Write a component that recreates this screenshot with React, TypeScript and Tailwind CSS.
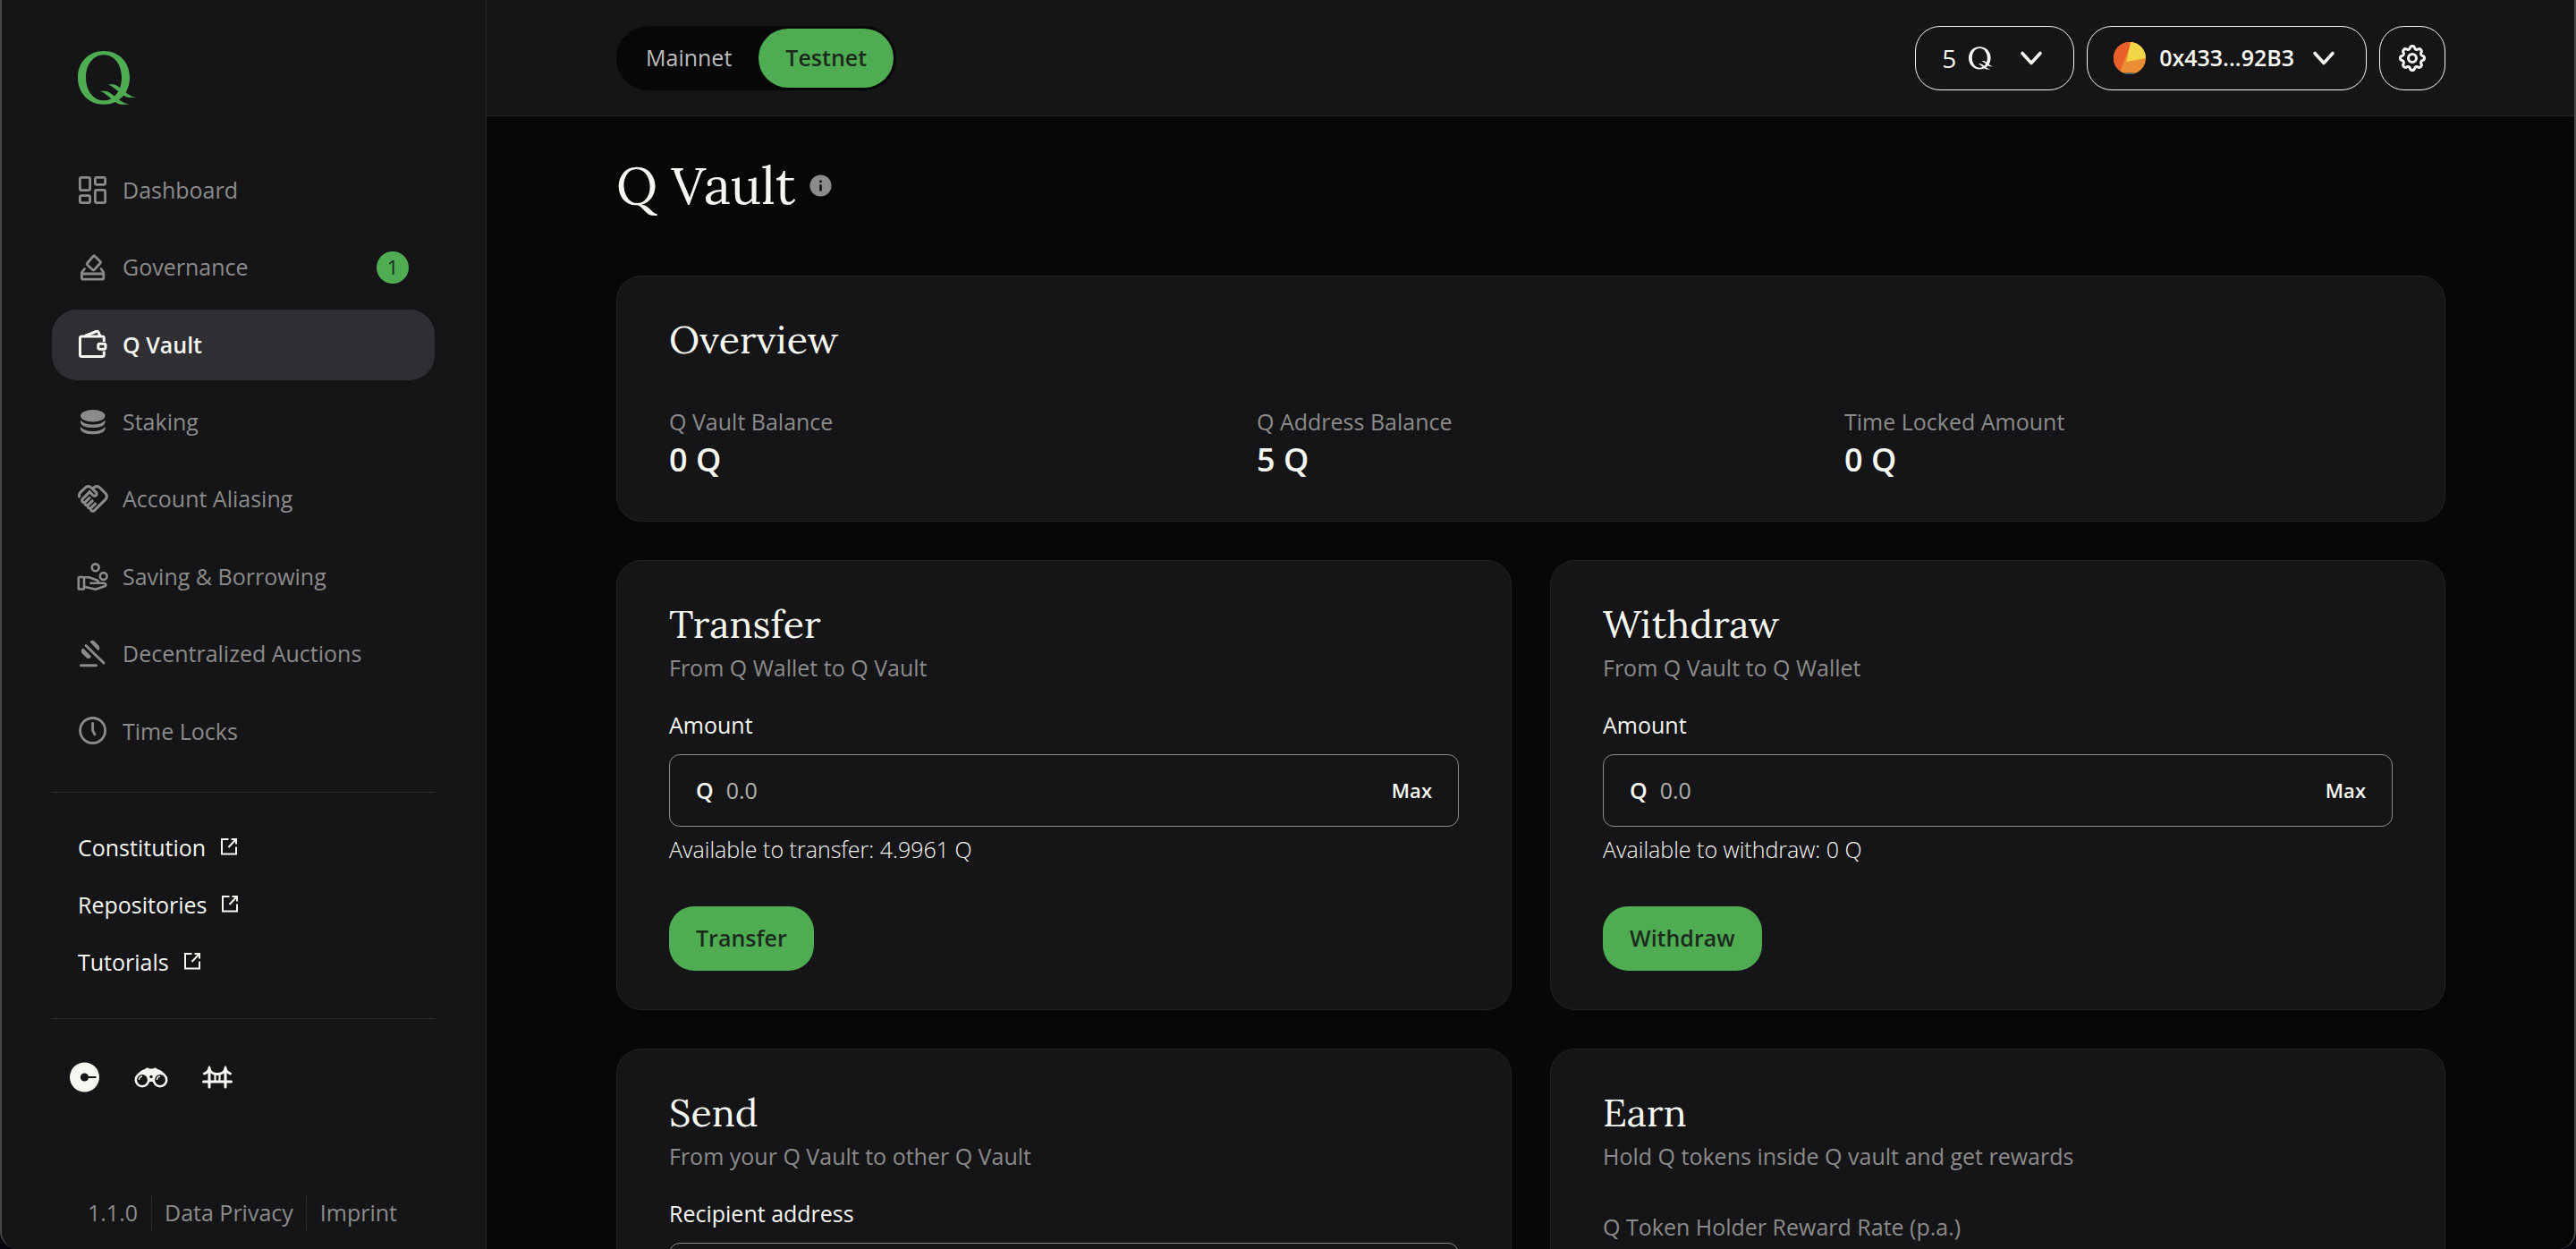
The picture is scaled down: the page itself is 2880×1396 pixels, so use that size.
import { useState } from "react";
import type { ReactNode } from "react";
import clsx from "clsx";
import { MdInfo, MdOutlineHandshake } from "react-icons/md";
import { TbSettings } from "react-icons/tb";

const NAV: { label: string; icon: ReactNode; badge?: number }[] = [
  {
    label: "Dashboard",
    icon: (
      <g stroke="currentColor" strokeWidth="2.8">
        <rect x="2.4" y="2.4" width="11.2" height="14.2" rx="1.6" />
        <rect x="19.4" y="2.4" width="11.2" height="8" rx="1.6" />
        <rect x="2.4" y="22.6" width="11.2" height="8" rx="1.6" />
        <rect x="19.4" y="16.4" width="11.2" height="14.2" rx="1.6" />
      </g>
    ),
  },
  {
    label: "Governance",
    badge: 1,
    icon: (
      <g stroke="currentColor" strokeWidth="2.8" strokeLinejoin="round" strokeLinecap="round">
        <path d="M18.6 4 25 10.2Q26 11.2 25 12.2L18.5 19.4Q17.5 20.4 16.5 19.4L10.7 14Q9.7 13 10.7 12L17.2 4.4Q18 3.4 18.6 4Z" />
        <path d="M7.5 18.5 4.4 22.5V28.5Q4.4 30.2 6 30.2H27Q28.8 30.2 28.8 28.5V22.5L26 18.5" />
        <path d="M5 24H28.5" />
      </g>
    ),
  },
  {
    label: "Q Vault",
    icon: (
      <g stroke="currentColor" strokeWidth="3" strokeLinejoin="round">
        <path d="M29.3 14V10Q29.3 8 27.3 8H4.500Q2.500 8 2.500 10V28.500Q2.500 30.500 4.500 30.500H27.300Q29.300 30.500 29.300 28.500V24.500" />
        <path d="M8 7.500 20.500 2.500Q22.500 1.800 23.300 3.800L24.800 7.500" />
        <rect x="22.8" y="16.2" width="8.2" height="6" rx="1.6" />
      </g>
    ),
  },
  {
    label: "Staking",
    icon: (
      <g fill="currentColor">
        <ellipse cx="16.8" cy="9.8" rx="13.8" ry="6.7" />
        <path d="M3 14.500Q7 19.500 16.800 19.500T30.600 14.500V17Q29.500 23 16.800 23T3 17Z" />
        <path d="M3 22Q7 27 16.800 27T30.600 22V24.500Q29.500 30.300 16.800 30.300T3 24.500Z" />
      </g>
    ),
  },
  {
    label: "Account Aliasing",
    icon: <MdOutlineHandshake x="-1.5" y="-2" size={37} />,
  },
  {
    label: "Saving & Borrowing",
    icon: (
      <g stroke="currentColor" strokeWidth="2.6" strokeLinejoin="round" strokeLinecap="round">
        <circle cx="19.7" cy="6.3" r="3.9" />
        <circle cx="28.7" cy="16" r="3.9" />
        <rect x=".8" y="17" width="6.2" height="13.5" rx="1" />
        <path d="M7 17.300H12.500L21.500 20.400Q24.500 22 21.800 23.700H14.500" />
        <path d="M22.500 23.800H29Q33 24.500 30.500 27L20 30.800 7 27.800" />
      </g>
    ),
  },
  {
    label: "Decentralized Auctions",
    icon: (
      <g>
        <path d="M9 7.500 29 27M3.500 29.800H20.500" stroke="currentColor" strokeWidth="3" strokeLinecap="round" />
        <path
          d="M6 10.500 15 19.500Q13.500 23.500 10 21.500L4.500 16Q2.500 12.500 6 10.500ZM13.500 3.500Q15.500 .5 18.500 2.500L23.700 8Q25.500 11.500 22.500 13Z"
          fill="currentColor"
        />
      </g>
    ),
  },
  {
    label: "Time Locks",
    icon: (
      <g stroke="currentColor" strokeWidth="2.8" strokeLinecap="round">
        <circle cx="16.6" cy="16.5" r="14" />
        <path d="M16.600 8.500V16.500L19 21" />
      </g>
    ),
  },
];

const LINKS = ["Constitution", "Repositories", "Tutorials"];

const BALANCES = [
  { label: "Q Vault Balance", value: "0 Q" },
  { label: "Q Address Balance", value: "5 Q" },
  { label: "Time Locked Amount", value: "0 Q" },
];

function QLogo({ className }: { className?: string }) {
  return (
    <svg viewBox="0 0 198 180" className={className} fill="currentColor">
      <path
        fillRule="evenodd"
        d="M87 0C138 0 174 38 174 89S138 179 87 179 0 140 0 89 36 0 87 0ZM87 13C52 13 27 46 27 89S52 166 87 166 147 132 147 89 122 13 87 13Z"
      />
      <path d="M101 112H116Q126 112 134 118L166 143Q179 153 198 156H174Q163 156 155 150L121 124Q112 117 101 112Z" />
      <path d="M75 134H90Q100 134 108 140L140 165Q153 175 172 179H148Q137 179 129 173L95 146Q86 139 75 134Z" />
    </svg>
  );
}

function Chevron() {
  return (
    <svg
      viewBox="0 0 24 16"
      className="h-4 w-6"
      fill="none"
      stroke="currentColor"
      strokeWidth="3.6"
      strokeLinecap="round"
      strokeLinejoin="round"
    >
      <path d="M2 2.500 12 13.500 22 2.500" />
    </svg>
  );
}

function ExternalIcon() {
  return (
    <svg viewBox="0 0 20 20" className="mb-1 h-5 w-5" fill="none" stroke="currentColor" strokeWidth="2">
      <path d="M9.500 2H2V18.500H18V10.500" />
      <path d="M9.500 11 17 3M12.500 2H18V7.500" />
    </svg>
  );
}

function Sidebar() {
  return (
    <aside className="flex w-[542px] shrink-0 flex-col border-r border-[#232325] bg-[#151517] pt-[57px] pr-[57px] pb-[22px] pl-14">
      <a href="#" aria-label="Home" className="ml-[29px] w-[66px] text-[#4fac53]">
        <QLogo className="h-[60px] w-[66px]" />
      </a>

      <nav className="mt-14 flex h-[684px] flex-col justify-between">
        {NAV.map((item) => {
          const active = item.label === "Q Vault";
          return (
            <a
              key={item.label}
              href="#"
              className={clsx(
                "flex h-[79px] items-center gap-4 rounded-[28px] px-[29px] text-[25px]",
                active ? "bg-[#2f2e33] font-semibold text-[#f7f7f2]" : "text-[#8b8b8b]"
              )}
            >
              <svg viewBox="0 0 34 34" className="h-[34px] w-[34px] overflow-visible" fill="none">
                {item.icon}
              </svg>
              {item.label}
              {item.badge && (
                <span className="ml-auto flex h-9 w-9 items-center justify-center rounded-full bg-[#4fac53] text-[22px] font-medium text-[#1c2a1e]">
                  {item.badge}
                </span>
              )}
            </a>
          );
        })}
      </nav>

      <div className="mt-7 flex flex-col gap-7 border-y border-[#2f2f32] py-11 pl-[29px]">
        {LINKS.map((link) => (
          <a key={link} href="#" className="flex h-9 items-center gap-4 text-[25px]">
            {link}
            <ExternalIcon />
          </a>
        ))}
      </div>

      <div className="mt-[46px] flex items-center gap-9 pl-[18px]">
        <a href="#" aria-label="Faucet">
          <svg viewBox="0 0 38 38" className="h-[38px] w-[38px]">
            <circle cx="18.5" cy="19" r="16.5" fill="currentColor" />
            <path d="M19 19H31.500" stroke="#151517" strokeWidth="2" />
            <circle cx="18.5" cy="19" r="4.6" fill="#151517" />
          </svg>
        </a>
        <a href="#" aria-label="Explorer">
          <svg viewBox="0 0 38 38" className="h-[38px] w-[38px]" fill="none">
            <path
              fill="currentColor"
              d="M3 17Q6 11.500 12 10Q14.500 7.500 17 9.500H21Q23.500 7.500 26 10Q32 11.500 35 17L30 18 26 20H22V24H16V20H12L8 18Z"
            />
            <circle cx="9" cy="22" r="7.2" fill="#151517" stroke="currentColor" strokeWidth="2.6" />
            <circle cx="29" cy="22" r="7.2" fill="#151517" stroke="currentColor" strokeWidth="2.6" />
            <path d="M5.500 22Q5.500 18.500 9 18M25.500 22Q25.500 18.500 29 18" stroke="currentColor" strokeWidth="1.5" />
            <circle cx="19" cy="18.5" r="1.7" fill="#151517" />
          </svg>
        </a>
        <a href="#" aria-label="Bridge">
          <svg viewBox="0 0 38 38" className="h-[38px] w-[38px]" fill="none" stroke="currentColor" strokeWidth="3" strokeLinecap="round">
            <path d="M10 8.500V30M28 8.500V30M3.500 24H34.500" />
            <path d="M4.500 15Q9 13 10 10Q12 15.500 19 15.500T28 10Q29 13 33.500 15" />
            <path d="M16.500 16V23M21.500 16V23" strokeWidth="2.2" />
          </svg>
        </a>
      </div>

      <div className="mt-auto flex h-9 items-center pl-10 text-[25px] text-[#8b8b8b]">
        <span className="pr-[15px]">1.1.0</span>
        <a href="#" className="border-x border-[#2f2f32] px-[14px]">
          Data Privacy
        </a>
        <a href="#" className="pl-[15px]">
          Imprint
        </a>
      </div>
    </aside>
  );
}

function Header() {
  const [network, setNetwork] = useState("Testnet");

  return (
    <header className="flex h-[130px] shrink-0 items-center justify-between border-b border-[#232325] bg-[#151517] pr-36 pl-[145px]">
      <div className="flex h-[72px] items-center rounded-full bg-[#070707] p-[3px]">
        {["Mainnet", "Testnet"].map((name) => (
          <button
            key={name}
            type="button"
            onClick={() => setNetwork(name)}
            className={clsx(
              "h-[66px] rounded-full px-[30px] text-[25px]",
              network === name ? "bg-[#4fac53] font-semibold text-[#1c2a1e]" : "text-[#bdbdbb]"
            )}
          >
            {name}
          </button>
        ))}
      </div>

      <div className="flex gap-[14px]">
        <button type="button" className="flex h-[72px] items-center rounded-[28px] border border-[#f7f7f2] pr-[35px] pl-[29px] text-[28px] font-medium">
          5
          <QLogo className="mr-[30px] ml-[14px] h-[26px] w-7" />
          <Chevron />
        </button>
        <button type="button" className="flex h-[72px] items-center rounded-[28px] border border-[#f7f7f2] pr-[35px] pl-[29px] text-[25px] font-semibold">
          <svg viewBox="0 0 36 36" className="mr-[15px] h-9 w-9">
            <clipPath id="avatar">
              <circle cx="18" cy="18" r="18" />
            </clipPath>
            <g clipPath="url(#avatar)">
              <rect width="36" height="36" fill="#eb8d34" />
              <path d="M0 0H20L6 36H0Z" fill="#e85f2a" />
              <path d="M19 0H36V18L14.500 22Z" fill="#f2d648" />
              <path d="M11 34.500H25V36H11ZM0 26 6 31 4 34H0Z" fill="#245a70" />
            </g>
          </svg>
          0x433...92B3
          <span className="ml-[21px]">
            <Chevron />
          </span>
        </button>
        <button
          type="button"
          aria-label="Settings"
          className="flex h-[72px] w-[74px] items-center justify-center rounded-[28px] border border-[#f7f7f2]"
        >
          <TbSettings className="h-9 w-9" />
        </button>
      </div>
    </header>
  );
}

function Card({ title, subtitle, children }: { title: string; subtitle?: string; children: ReactNode }) {
  return (
    <section className="rounded-[28px] border border-[#232325] bg-[#151517] px-[58px] py-[43px]">
      <h2 className="font-['Lora',serif] text-[43px] leading-[56px]">{title}</h2>
      {subtitle && <p className="text-[25px] leading-10 text-[#8b8b8b]">{subtitle}</p>}
      {children}
    </section>
  );
}

function AmountForm({ action, hint }: { action: string; hint: string }) {
  const [amount, setAmount] = useState("");
  const id = `${action.toLowerCase()}-amount`;

  return (
    <form className="mt-[27px]" onSubmit={(e) => e.preventDefault()}>
      <label htmlFor={id} className="block text-[25px] leading-[34px]">
        Amount
      </label>
      <div className="mt-4 flex h-[81px] items-center rounded-xl border border-[#8b8b8b] px-[29px] text-[25px]">
        <span className="font-semibold">Q</span>
        <input
          id={id}
          value={amount}
          onChange={(e) => setAmount(e.target.value)}
          placeholder="0.0"
          className="ml-[14px] min-w-0 flex-1 bg-transparent outline-none placeholder:text-[#b0b0ae]"
        />
        <button type="button" className="text-[22px] font-semibold">
          Max
        </button>
      </div>
      <p className="mt-2 text-[25px] leading-[34px] font-light">{hint}</p>
      <button type="submit" className="mt-[47px] block h-[72px] rounded-[28px] bg-[#4fac53] px-[30px] text-[25px] font-semibold text-[#1c2a1e]">
        {action}
      </button>
    </form>
  );
}

export default function App() {
  return (
    <div className="h-screen bg-[#05050f] font-['Open_Sans',sans-serif] text-[#f7f7f2]">
      <div className="flex h-full overflow-hidden rounded-b-[20px] border-x-2 border-[#48484a] bg-[#070707]">
        <Sidebar />
        <div className="flex min-w-0 flex-1 flex-col">
          <Header />
          <main className="min-h-0 flex-1 overflow-hidden pt-[39px] pr-36 pl-[145px]">
            <div className="mb-[63px] flex items-center gap-[14px]">
              <h1 className="font-['Lora',serif] text-[58px] leading-[76px]">Q Vault</h1>
              <MdInfo className="h-[29px] w-[29px] text-[#8b8b8b]" />
            </div>

            <Card title="Overview">
              <dl className="mt-[46px] grid grid-cols-3 gap-11">
                {BALANCES.map((b) => (
                  <div key={b.label}>
                    <dt className="text-[25px] leading-[34px] text-[#8b8b8b]">{b.label}</dt>
                    <dd className="text-[36px] leading-[51px] font-semibold">{b.value}</dd>
                  </div>
                ))}
              </dl>
            </Card>

            <div className="mt-[43px] grid grid-cols-2 gap-[43px]">
              <Card title="Transfer" subtitle="From Q Wallet to Q Vault">
                <AmountForm action="Transfer" hint="Available to transfer: 4.9961 Q" />
              </Card>
              <Card title="Withdraw" subtitle="From Q Vault to Q Wallet">
                <AmountForm action="Withdraw" hint="Available to withdraw: 0 Q" />
              </Card>
              <Card title="Send" subtitle="From your Q Vault to other Q Vault">
                <label htmlFor="recipient" className="mt-[27px] block text-[25px] leading-[34px]">
                  Recipient address
                </label>
                <input
                  id="recipient"
                  className="mt-4 h-[81px] w-full rounded-xl border border-[#8b8b8b] bg-transparent px-[29px] text-[25px] outline-none"
                />
              </Card>
              <Card title="Earn" subtitle="Hold Q tokens inside Q vault and get rewards">
                <p className="mt-[42px] text-[25px] leading-[34px] text-[#8b8b8b]">Q Token Holder Reward Rate (p.a.)</p>
              </Card>
            </div>
          </main>
        </div>
      </div>
    </div>
  );
}
